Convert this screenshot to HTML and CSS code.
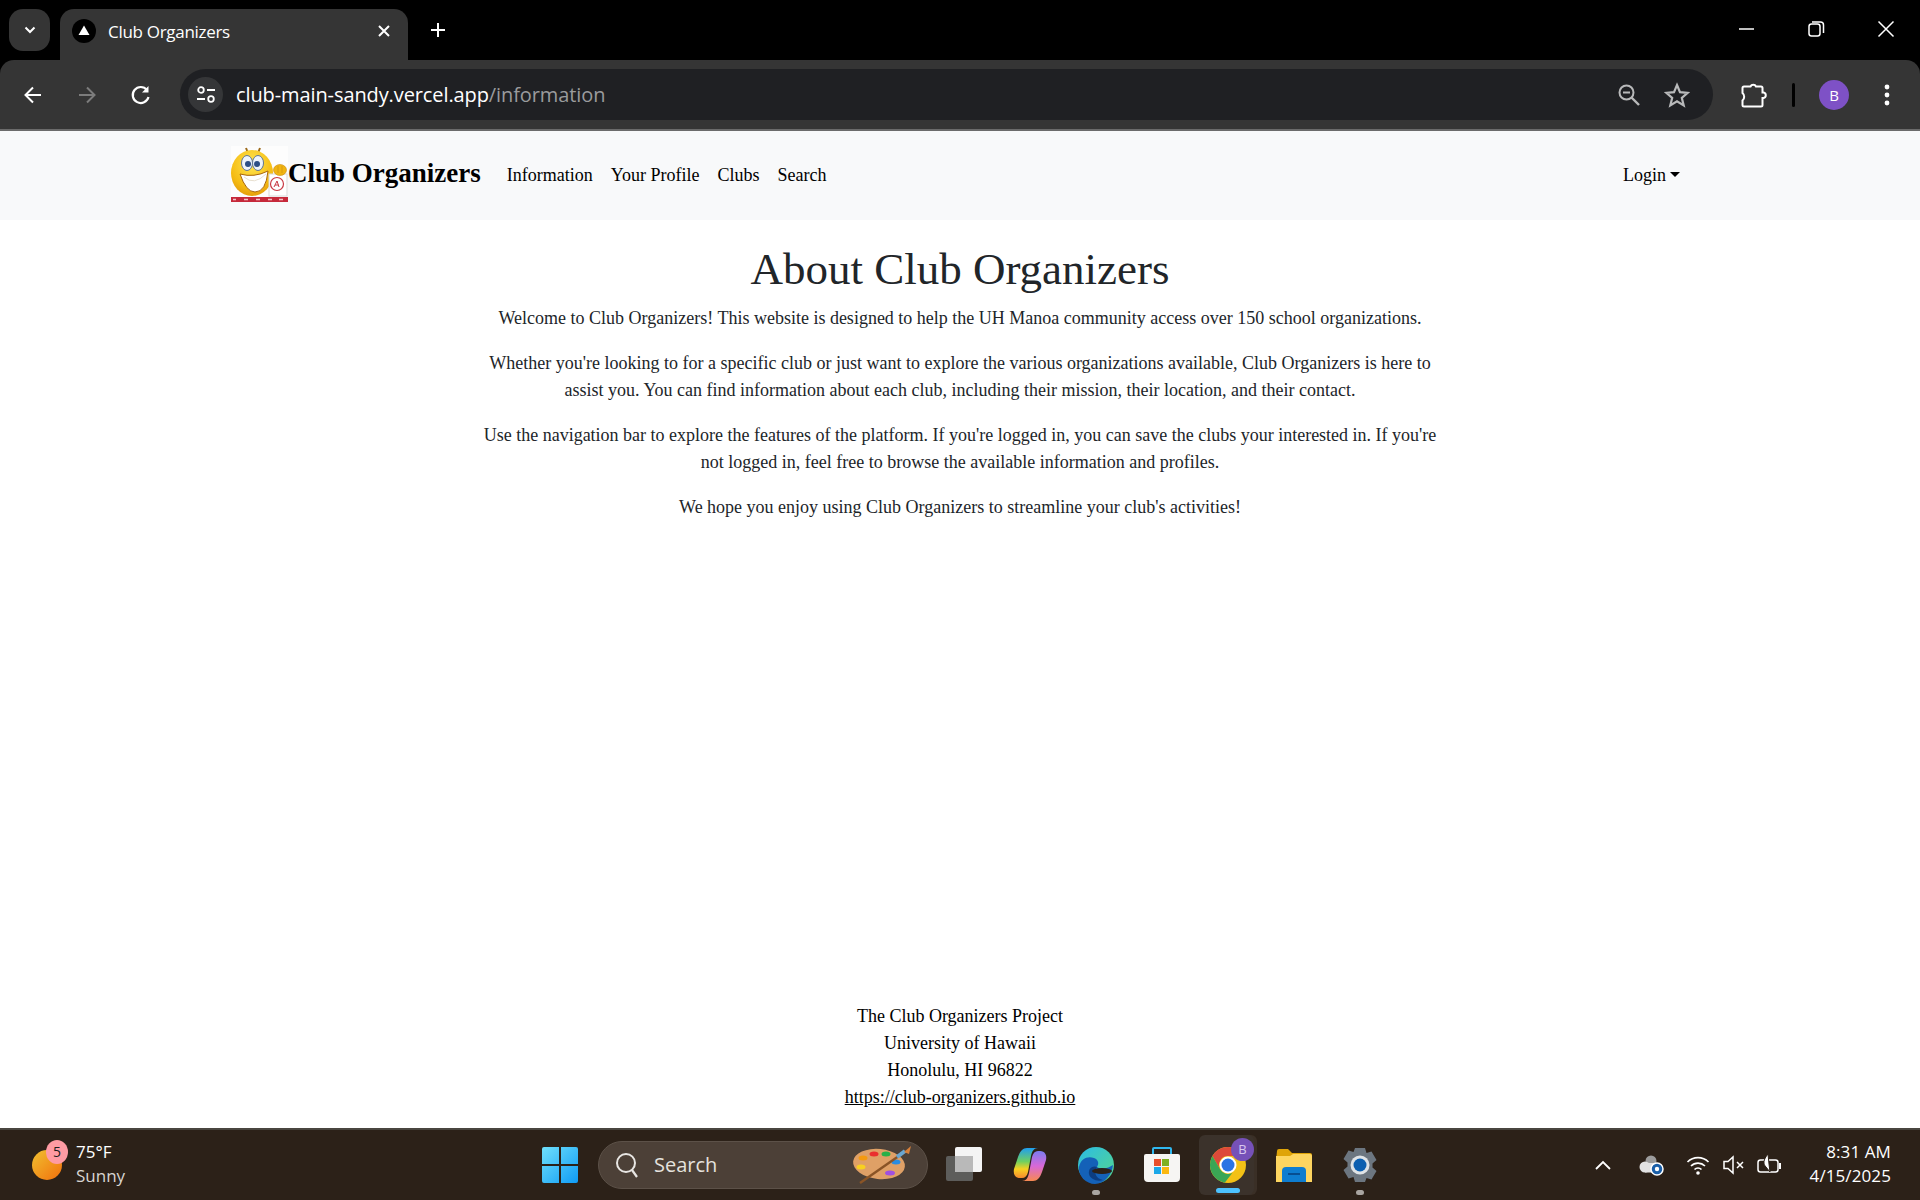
FILE: index.html
```html
<!DOCTYPE html>
<html lang="en">
<head>
<meta charset="utf-8">
<title>Club Organizers</title>
<link rel="stylesheet" href="styles.css">
</head>
<body>
<div class="window">
  <header class="browser">
    <div class="tabstrip">
      <button class="tabsearch"><svg width="16" height="16" viewBox="0 0 16 16"><path d="M3.500 5.500 8 10l4.500-4.500" fill="none" stroke="#fff" stroke-width="2"/></svg></button>
      <div class="tab">
        <span class="favicon"><svg width="24" height="24" viewBox="0 0 24 24"><circle cx="12" cy="12" r="12" fill="#000"/><path d="M12 6.500 17.500 16h-11z" fill="#fff"/></svg></span>
        <span class="tabtitle">Club Organizers</span>
        <svg class="tabclose" width="14" height="14" viewBox="0 0 14 14"><path d="M2 2l10 10M12 2 2 12" stroke="#fff" stroke-width="2"/></svg>
      </div>
      <svg class="newtab" width="18" height="18" viewBox="0 0 18 18"><path d="M9 2v14M2 9h14" stroke="#fff" stroke-width="2"/></svg>
      <div class="winctl">
        <svg width="70" height="20" viewBox="0 0 20 20"><path d="M3 10h15" stroke="#fff" stroke-width="1.500"/></svg>
        <svg width="70" height="20" viewBox="0 0 20 20"><rect x="3" y="5" width="11" height="12" rx="2.500" fill="none" stroke="#fff" stroke-width="1.500"/><path d="M6 3h8.500a3 3 0 0 1 3 3v8" fill="none" stroke="#fff" stroke-width="1.500"/></svg>
        <svg width="70" height="20" viewBox="0 0 20 20"><path d="M2.500 2.500l15 15M17.500 2.500l-15 15" stroke="#fff" stroke-width="1.500"/></svg>
      </div>
    </div>
    <div class="toolbar">
      <div class="navbtn"><svg width="24" height="24" viewBox="0 0 24 24"><path d="M20 12H4.500M12 4.500 4.500 12l7.500 7.500" fill="none" stroke="#fff" stroke-width="2"/></svg></div>
      <div class="navbtn"><svg width="24" height="24" viewBox="0 0 24 24"><path d="M4 12h15.500M12 4.500l7.500 7.500-7.500 7.500" fill="none" stroke="#7c7c7c" stroke-width="2"/></svg></div>
      <div class="navbtn"><svg width="24" height="24" viewBox="0 0 24 24"><path d="M19.500 14a8 8 0 1 1-1.500-7" fill="none" stroke="#fff" stroke-width="2.200"/><path d="M19.500 3v6.500H13z" fill="#fff"/></svg></div>
      <div class="omnibox">
        <span class="siteinfo"><svg width="22" height="22" viewBox="0 0 22 22"><circle cx="6" cy="6" r="2.800" fill="none" stroke="#fff" stroke-width="1.800"/><path d="M12 6h8M2 15h8" stroke="#fff" stroke-width="1.800"/><circle cx="16" cy="15" r="2.800" fill="none" stroke="#fff" stroke-width="1.800"/></svg></span>
        <span class="url">club-main-sandy.vercel.app<span class="urlpath">/information</span></span>
        <svg class="zoomicon" width="24" height="24" viewBox="0 0 24 24"><circle cx="9.500" cy="9.500" r="7" fill="none" stroke="#b8b9ba" stroke-width="2"/><path d="M14.500 14.500l7.500 7.500" stroke="#b8b9ba" stroke-width="2.400"/><path d="M6 9.500h7" stroke="#b8b9ba" stroke-width="2"/></svg>
        <svg class="star" width="26" height="26" viewBox="0 0 26 26"><path d="M13 3l3 7.200 7.700.6-5.900 5 1.900 7.600L13 19.300l-6.700 4.100 1.900-7.600-5.900-5 7.700-.6z" fill="none" stroke="#b8b9ba" stroke-width="2.200"/></svg>
      </div>
      <div class="toolright">
        <svg class="ext" width="26" height="28" viewBox="0 0 26 28"><path d="M3 5.500h6.500a3 3 0 0 1 5.500 0h5a1.500 1.500 0 0 1 1.500 1.500v4.500h1a2.800 2.800 0 0 1 0 5.500h-1V24a1.500 1.500 0 0 1-1.500 1.500H3A1.500 1.500 0 0 1 1.500 24v-4.500a5 5 0 0 0 0-7.500V7A1.500 1.500 0 0 1 3 5.500z" fill="none" stroke="#fff" stroke-width="2"/></svg>
        <span class="sep"></span>
        <span class="avatar">B</span>
        <svg class="kebab" width="6" height="22" viewBox="0 0 6 22"><circle cx="3" cy="3" r="2.400" fill="#fff"/><circle cx="3" cy="11" r="2.400" fill="#fff"/><circle cx="3" cy="19" r="2.400" fill="#fff"/></svg>
      </div>
    </div>
  </header>

  <nav class="navbar">
    <svg class="logo" width="57" height="56" viewBox="0 0 57 56" role="img" aria-label="Club Organizers logo">
      <rect width="57" height="56" fill="#fdfdfd"/>
      <defs><radialGradient id="face" cx=".5" cy=".3" r=".8"><stop offset="0" stop-color="#ffe650"/><stop offset=".65" stop-color="#f5bb12"/><stop offset="1" stop-color="#dc8f08"/></radialGradient></defs>
      <path d="M15 2l2 5M29 2l-2 5" stroke="#9c6a1a" stroke-width="2"/>
      <ellipse cx="21" cy="27" rx="21" ry="23" fill="url(#face)"/>
      <ellipse cx="16" cy="17" rx="5.500" ry="7.500" fill="#eef4fb" stroke="#5f7594"/>
      <ellipse cx="27" cy="17" rx="5.500" ry="7.500" fill="#eef4fb" stroke="#5f7594"/>
      <circle cx="17" cy="18" r="3" fill="#2c4f86"/><circle cx="26" cy="18" r="3" fill="#2c4f86"/>
      <path d="M9 28q14 4 28-3-2 21-13 21-9 0-15-18z" fill="#fff" stroke="#a8650a"/>
      <path d="M13 31q10 9 22-3" fill="none" stroke="#e8e0d0"/>
      <rect x="38" y="28" width="18" height="22" fill="#fff" stroke="#d8d8d8"/>
      <circle cx="46" cy="38" r="6.500" fill="none" stroke="#c83a44" stroke-width="1.200"/>
      <path d="M43 41l3-6 2 6M44 39h3.500" fill="none" stroke="#c83a44"/>
      <ellipse cx="49" cy="24" rx="6.500" ry="5.500" fill="#f1b512" stroke="#c98a10" stroke-width=".6"/>
      <path d="M47 20v7M51 20v7" stroke="#c98a10" stroke-width=".6"/>
      <rect y="51" width="57" height="5" fill="#c6293a"/>
      <path d="M2 53.500h3M13 53.500h4M25 53.500h4M37 53.500h4M48 53.500h4" stroke="#f2c4c8" stroke-width="1.500"/>
    </svg>
    <a class="brand">Club Organizers</a>
    <ul class="navlinks">
      <li>Information</li>
      <li>Your Profile</li>
      <li>Clubs</li>
      <li>Search</li>
    </ul>
    <a class="login">Login<span class="caret"></span></a>
  </nav>

  <main class="content">
    <h1>About Club Organizers</h1>
    <p>Welcome to Club Organizers! This website is designed to help the UH Manoa community access over 150 school organizations.</p>
    <p>Whether you're looking to for a specific club or just want to explore the various organizations available, Club Organizers is here to assist you. You can find information about each club, including their mission, their location, and their contact.</p>
    <p>Use the navigation bar to explore the features of the platform. If you're logged in, you can save the clubs your interested in. If you're not logged in, feel free to browse the available information and profiles.</p>
    <p>We hope you enjoy using Club Organizers to streamline your club's activities!</p>
  </main>

  <footer class="sitefooter">
    <div>The Club Organizers Project</div>
    <div>University of Hawaii</div>
    <div>Honolulu, HI 96822</div>
    <a>https://club-organizers.github.io</a>
  </footer>

  <div class="taskbar">
    <div class="weather">
      <span class="sun"><span class="sunbadge">5</span></span>
      <div class="weathertext"><div>75°F</div><div class="dim">Sunny</div></div>
    </div>
    <div class="cell">
      <svg width="36" height="36" viewBox="0 0 36 36"><defs><linearGradient id="win" x1="0" y1="0" x2="1" y2="1"><stop offset="0" stop-color="#6fe0fb"/><stop offset="1" stop-color="#0f9bf5"/></linearGradient></defs><path d="M0 2a2 2 0 0 1 2-2h15v17H0zM19 0h15a2 2 0 0 1 2 2v15H19zM0 19h17v17H2a2 2 0 0 1-2-2zM19 19h17v15a2 2 0 0 1-2 2H19z" fill="url(#win)"/></svg>
    </div>
    <div class="searchpill">
      <svg width="26" height="28" viewBox="0 0 26 28"><circle cx="11" cy="12" r="9" fill="none" stroke="#e8e6e3" stroke-width="2"/><path d="M17 19l5 7" stroke="#e8e6e3" stroke-width="2.200"/></svg>
      <span class="searchtext">Search</span>
      <svg class="palette" width="62" height="40" viewBox="0 0 62 40"><ellipse cx="28" cy="19" rx="26" ry="15" fill="#dfa066" transform="rotate(6 28 19)"/><ellipse cx="12" cy="13" rx="4.500" ry="2.500" fill="#f59a10"/><ellipse cx="10" cy="22" rx="4.500" ry="2.500" fill="#f8d020"/><ellipse cx="23" cy="9" rx="4.500" ry="2.500" fill="#ea2f2f"/><ellipse cx="35" cy="9" rx="4.500" ry="2.500" fill="#28b048"/><ellipse cx="45" cy="17" rx="4.500" ry="2.500" fill="#2a8ce0"/><ellipse cx="39" cy="28" rx="5" ry="2.500" fill="#a050e0"/><path d="M9 38l46-32" stroke="#8a5426" stroke-width="2.500"/><path d="M46 12l8-6" stroke="#6aa6d0" stroke-width="4"/><path d="M53 7l7-6-2 8z" fill="#d8803a"/></svg>
    </div>
    <div class="cell"><svg width="36" height="36" viewBox="0 0 36 36"><rect y="9" width="27" height="25" rx="2" fill="#5d5d5b"/><rect x="9" y="0" width="27" height="25" rx="2" fill="#f4f4f4"/><rect x="9" y="9" width="18" height="16" fill="#b9b9b9"/></svg></div>
    <div class="cell"><svg width="34" height="34" viewBox="0 0 34 34"><defs><linearGradient id="copl" x1="0" y1="0" x2="0" y2="1"><stop offset="0" stop-color="#1f9ef0"/><stop offset=".45" stop-color="#6fd060"/><stop offset=".7" stop-color="#f8d020"/><stop offset="1" stop-color="#f58a30"/></linearGradient><linearGradient id="copr" x1="0" y1="0" x2="0" y2="1"><stop offset="0" stop-color="#7a7cf0"/><stop offset=".5" stop-color="#d868d8"/><stop offset="1" stop-color="#f88a50"/></linearGradient></defs><path d="M14 0H25C21 0 19 3 18 8L15 24C14 28 12 30 9 30H7C2 30 0 26 1 21L5 9C7 3 10 0 14 0Z" fill="url(#copl)"/><path d="M20 33H9C13 33 15 30 16 25L19 9C20 5 22 3 25 3H27C32 3 34 7 33 12L29 24C27 30 24 33 20 33Z" fill="url(#copr)"/></svg></div>
    <div class="cell dotted"><svg width="36" height="38" viewBox="0 0 36 38"><defs><linearGradient id="edge" x1="0" y1="0" x2="1" y2="1"><stop offset="0" stop-color="#2bbbe6"/><stop offset="1" stop-color="#56d88a"/></linearGradient></defs><circle cx="18" cy="19" r="18" fill="url(#edge)"/><path d="M1 21C3 12 10 10 16 12c5 2 5 6 3 9 5 3 12 1 16-2-1 10-9 19-18 19C8 38 0 30 1 21z" fill="#1461b8"/><path d="M19 21c-4-2-9 1-8 7 1 5 8 8 14 6-7-1-10-8-6-13z" fill="#0c3d82"/><ellipse cx="24" cy="25" rx="10" ry="3" fill="#2c2118"/></svg></div>
    <div class="cell"><svg width="36" height="36" viewBox="0 0 36 36"><path d="M9 8V2a1 1 0 0 1 1-1h16a1 1 0 0 1 1 1v6" fill="none" stroke="#30b8f0" stroke-width="2"/><path d="M2 7h32a2 2 0 0 1 2 2v22a4 4 0 0 1-4 4H4a4 4 0 0 1-4-4V9a2 2 0 0 1 2-2z" fill="#f6f5f3"/><rect x="10" y="12" width="7" height="7" fill="#e8502c"/><rect x="18" y="12" width="7" height="7" fill="#7fb020"/><rect x="10" y="20" width="7" height="7" fill="#1ca8e8"/><rect x="18" y="20" width="7" height="7" fill="#fbb810"/></svg></div>
    <div class="cell active">
      <span class="chromeicon"><svg width="36" height="36" viewBox="0 0 36 36"><circle cx="18" cy="18" r="18" fill="#f3c116"/><path d="M18 0a18 18 0 0 1 15.600 9H18A9 9 0 0 0 10.200 22.500L2.400 9A18 18 0 0 1 18 0z" fill="#dd4a3a"/><path d="M2.400 9l7.800 13.500A9 9 0 0 0 22.500 25.800L14.700 35.700A18 18 0 0 1 2.400 9z" fill="#3aa655"/><circle cx="18" cy="18" r="8.500" fill="#fff"/><circle cx="18" cy="18" r="6.500" fill="#2a74e4"/></svg><span class="chromebadge">B</span></span>
    </div>
    <div class="cell"><svg width="36" height="33" viewBox="0 0 36 33"><path d="M1 2a2 2 0 0 1 2-2h9l4 4h18a2 2 0 0 1 2 2v6H0z" fill="#dfa408"/><path d="M0 7h14l3-2h17a2 2 0 0 1 2 2v26H0z" fill="#fdd560"/><path d="M6 33v-11a4 4 0 0 1 4-4h16a4 4 0 0 1 4 4v11z" fill="#0e7dd0"/><path d="M12 25h12" stroke="#063f7c" stroke-width="1.500"/></svg></div>
    <div class="cell dotted"><svg width="36" height="36" viewBox="0 0 36 36"><path d="M13 1h10l1.500 5 5-1.500 5 8.500-4 3.500v4l4 3.500-5 8.500-5-1.500L23 35H13l-1.500-5-5 1.500-5-8.500 4-3.500v-4l-4-3.500 5-8.500 5 1.500z" fill="#6c7680"/><circle cx="18" cy="18" r="9.500" fill="#dfe3e6"/><circle cx="18" cy="18" r="6.500" fill="#0c5fb0"/></svg></div>
    <div class="tray">
      <svg width="18" height="12" viewBox="0 0 18 12"><path d="M2 10l7-7 7 7" fill="none" stroke="#fff" stroke-width="1.800"/></svg>
      <svg class="trayitem cloud" width="26" height="22" viewBox="0 0 26 22"><circle cx="13" cy="7" r="5.500" fill="#9c9c9c"/><circle cx="7" cy="13" r="5.500" fill="#e2e2e2"/><rect x="7" y="9" width="12" height="9.500" fill="#e2e2e2"/><circle cx="19" cy="15" r="6" fill="#1a5fa8" stroke="#fff" stroke-width="1.500"/><circle cx="19" cy="15" r="2.200" fill="#fff"/></svg>
      <svg class="trayitem wifi" width="24" height="22" viewBox="0 0 24 22"><path d="M1.500 8a15 15 0 0 1 21 0M5 12a10 10 0 0 1 14 0M8.500 15.500a5 5 0 0 1 7 0" fill="none" stroke="#fff" stroke-width="1.700"/><circle cx="12" cy="19" r="1.800" fill="#fff"/></svg>
      <svg class="trayitem vol" width="24" height="22" viewBox="0 0 24 22"><path d="M2 7.500h4L11 3v16l-5-4.500H2z" fill="none" stroke="#fff" stroke-width="1.500"/><path d="M15 8l6 6M21 8l-6 6" stroke="#fff" stroke-width="1.500"/></svg>
      <svg class="trayitem batt" width="26" height="24" viewBox="0 0 26 24"><rect x="1" y="7" width="20" height="12" rx="2.500" fill="none" stroke="#fff" stroke-width="1.500"/><rect x="22" y="10" width="2" height="6" fill="#fff"/><path d="M11 1c-5 6-5 10-2 13l4 5-1-8z" fill="#fff" stroke="#2c2118"/></svg>
      <div class="clock"><div>8:31 AM</div><div>4/15/2025</div></div>
    </div>
  </div>
</div>
</body>
</html>
```
FILE: styles.css
```css
* { box-sizing: border-box; }
html, body { margin: 0; padding: 0; }
body { font-family: "Liberation Serif", "Times New Roman", serif; color: #212529; background: #fff; }
.window { width: 1920px; height: 1200px; display: flex; flex-direction: column; overflow: hidden; }

/* browser chrome */
.browser { background: #000; font-family: "Open Sans", sans-serif; flex: none; }
.tabstrip { height: 60px; display: flex; align-items: flex-end; padding-left: 9px; position: relative; }
.tabsearch { width: 41px; height: 42px; align-self: flex-start; margin-top: 9px; border: 0; padding: 0; background: #353535; border-radius: 14px; display: flex; align-items: center; justify-content: center; }
.tab { width: 348px; height: 51px; margin-left: 10px; background: #353535; border-radius: 14px 14px 0 0; display: flex; align-items: center; padding: 0 17px 8px 12px; color: #fff; font-size: 17px; }
.favicon { width: 24px; height: 24px; display: block; }
.favicon svg { display: block; }
.tabtitle { margin-left: 12px; margin-top: 2px; flex: 1; letter-spacing: -.3px; }
.newtab { align-self: flex-start; margin: 21px 0 0 21px; }
.winctl { margin-left: auto; align-self: flex-start; margin-top: 19px; display: flex; margin-right: -1px; }
.toolbar { height: 71px; background: #353535; border-radius: 14px 14px 0 0; border-bottom: 2px solid #6b6b6b; display: flex; align-items: center; padding: 0 0 0 6px; }
.navbtn { width: 54px; display: flex; justify-content: center; }
.omnibox { flex: 1; margin-left: 12px; height: 51px; border-radius: 26px; background: #1f2023; display: flex; align-items: center; padding: 0 23px 0 8px; }
.siteinfo { width: 35px; height: 35px; border-radius: 50%; background: #353638; display: flex; align-items: center; justify-content: center; }
.url { margin-left: 13px; color: #fff; font-size: 20px; flex: 1; letter-spacing: -.1px; }
.urlpath { color: #9a9b9d; }
.zoomicon { margin-right: 23px; }
.toolright { width: 207px; display: flex; align-items: center; padding-left: 28px; }
.sep { width: 3px; height: 24px; background: #000; border-radius: 2px; margin-left: 25px; }
.avatar { width: 30px; height: 30px; border-radius: 50%; background: #7e51c6; color: #fff; font-size: 15px; display: flex; align-items: center; justify-content: center; margin-left: 24px; }
.kebab { margin-left: 35px; }

/* navbar */
.navbar { flex: none; height: 89px; background: #f8f9fa; display: flex; align-items: center; padding: 0 240px 0 230px; color: #000; }
.logo { display: block; flex: none; margin-left: 1px; margin-top: -3px; }
.brand { font-weight: 700; font-size: 27px; margin-top: -4px; }
.navlinks { list-style: none; margin: 0 0 0 26px; padding: 0; display: flex; gap: 18px; font-size: 18px; }
.login { margin-left: auto; font-size: 18px; display: flex; align-items: center; }
.caret { width: 0; height: 0; border-left: 5px solid transparent; border-right: 5px solid transparent; border-top: 5px solid #000; margin-left: 4px; margin-top: -3px; }

/* page */
.content { flex: 1; width: 960px; margin: 0 auto; text-align: center; font-size: 18px; line-height: 27px; padding-top: 22px; }
h1 { font-size: 45px; font-weight: 400; line-height: 54px; margin: 0 0 9px; }
p { margin: 0 0 18px; }
.sitefooter { flex: none; text-align: center; font-size: 18px; line-height: 27px; color: #000; padding-bottom: 17px; }
.sitefooter a { text-decoration: underline; }

/* taskbar */
.taskbar { flex: none; height: 72px; background: #2c2118; border-top: 2px solid #4a4640; display: flex; align-items: center; font-family: "Open Sans", sans-serif; color: #fff; font-size: 17px; }
.weather { width: 527px; display: flex; align-items: center; padding-left: 32px; }
.sun { width: 30px; height: 30px; border-radius: 50%; background: linear-gradient(135deg, #f0c030, #f2700c); position: relative; display: block; }
.sunbadge { position: absolute; left: 14px; top: -10px; width: 22px; height: 24px; border-radius: 50%; background: #ff9ba3; color: #1d1d1d; font-size: 14px; line-height: 24px; text-align: center; }
.weathertext { margin-left: 14px; line-height: 24px; margin-top: -2px; }
.dim { color: #d8d5d1; }
.cell { width: 66px; height: 60px; display: flex; align-items: center; justify-content: center; position: relative; }
.cell svg { display: block; }
.dotted::after { content: ""; position: absolute; left: 29px; bottom: 0; width: 8px; height: 5px; border-radius: 3px; background: #a9a5a1; }
.active::before { content: ""; position: absolute; left: 4px; top: 0; width: 55px; height: 60px; border-radius: 6px; background: #3b322b; box-shadow: 3px 0 0 #3a2f26; }
.active::after { content: ""; position: absolute; left: 21px; bottom: 2px; width: 24px; height: 5px; border-radius: 3px; background: #4cc2ff; }
.chromeicon { position: relative; display: block; z-index: 1; }
.chromebadge { position: absolute; left: 21px; top: -9px; width: 23px; height: 23px; border-radius: 50%; background: #7651b8; color: #d8c8f0; font-size: 13px; line-height: 23px; text-align: center; }
.searchpill { width: 330px; height: 48px; margin: 0 3px 0 5px; border-radius: 24px; background: #4c4037; border: 1px solid #5c5148; display: flex; align-items: center; padding: 0 14px 0 16px; }
.searchtext { margin-left: 13px; flex: 1; font-size: 20px; color: #e5e2de; margin-top: -2px; }
.tray { margin-left: auto; display: flex; align-items: center; padding-right: 29px; }
.trayitem { display: block; }
.cloud { margin-left: 26px; }
.wifi { margin-left: 22px; }
.vol { margin-left: 12px; }
.batt { margin-left: 11px; }
.clock { margin-left: 27px; text-align: right; line-height: 24px; margin-top: -2px; letter-spacing: .1px; }
```
